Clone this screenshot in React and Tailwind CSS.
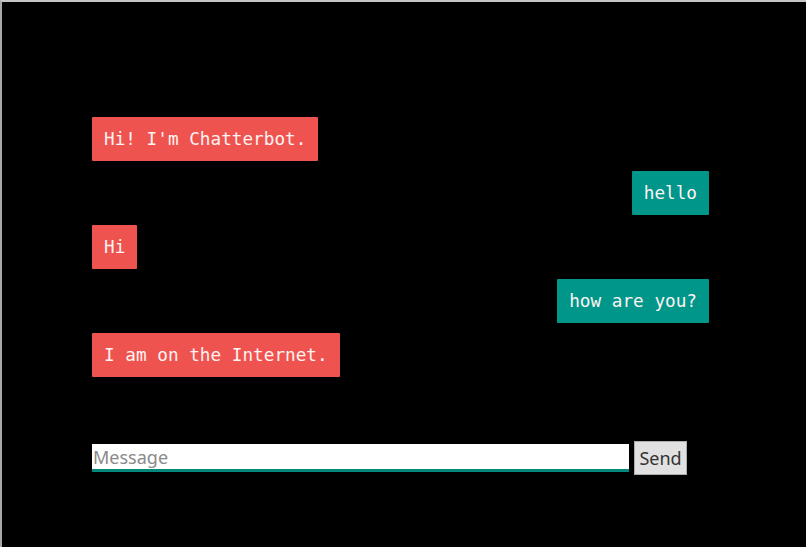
export default function App() {
  const msgs = [
    { t: "Hi! I'm Chatterbot.", me: false },
    { t: "hello", me: true },
    { t: "Hi", me: false },
    { t: "how are you?", me: true },
    { t: "I am on the Internet.", me: false },
  ];
  return (
    <div className="w-[806px] h-[547px] bg-black border-t-2 border-l-2 border-t-[#c4c4c4] border-l-[#a8a8a8] overflow-hidden">
      <div className="pl-[90px] pt-[115px] w-[707px]">
        <div className="flex flex-col gap-[10px]">
          {msgs.map((m, i) => (
            <div key={i} className={m.me ? "flex justify-end" : "flex justify-start"}>
              <div
                className={
                  (m.me ? "bg-[#00968a]" : "bg-[#ef5350]") +
                  " text-[#fdf3f2] h-[44px] px-[12px] pt-[2px] flex items-center rounded-[1px] text-[17.7px] leading-none whitespace-pre"
                }
                style={{ fontFamily: '"DejaVu Sans Mono", "Liberation Mono", monospace' }}
              >
                {m.t}
              </div>
            </div>
          ))}
        </div>
        <div className="mt-[64px] flex items-center gap-[5px]" style={{ fontFamily: '"Noto Sans", "Open Sans", sans-serif' }}>
          <input
            placeholder="Message"
            className="w-[537px] h-[28px] bg-white border-b-[3px] border-b-[#00897b] px-[1px] text-[18px] leading-none outline-none placeholder:text-[#8a8a8a] text-black"
          />
          <button className="w-[53px] h-[34px] bg-[#e1e1e1] border border-[#adadad] text-[18px] text-[#333] leading-none flex items-center justify-center">
            Send
          </button>
        </div>
      </div>
    </div>
  );
}
